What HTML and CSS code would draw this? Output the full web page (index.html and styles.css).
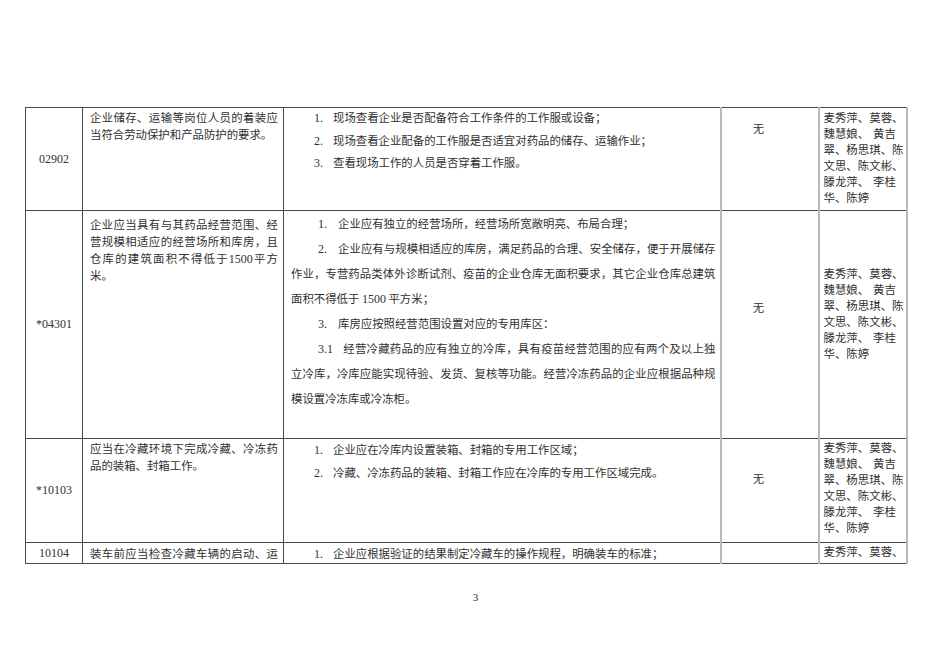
FILE: index.html
```html
<!DOCTYPE html>
<html lang="zh-CN">
<head>
<meta charset="utf-8">
<title>检查表</title>
<link rel="stylesheet" href="styles.css">
</head>
<body>
<div class="page">
  <table class="grid">
    <colgroup>
      <col class="c1"><col class="c2"><col class="c3"><col class="c4"><col class="c5">
    </colgroup>
    <tr class="r1">
      <td class="code">02902</td>
      <td class="req">
        <div class="j">企业储存、运输等岗位人员的着装应</div>
        <div>当符合劳动保护和产品防护的要求。</div>
      </td>
      <td class="method m1">
        <div class="item"><span class="num">1.</span><span>现场查看企业是否配备符合工作条件的工作服或设备；</span></div>
        <div class="item"><span class="num">2.</span><span>现场查看企业配备的工作服是否适宜对药品的储存、运输作业；</span></div>
        <div class="item"><span class="num">3.</span><span>查看现场工作的人员是否穿着工作服。</span></div>
      </td>
      <td class="none n1">无</td>
      <td class="names p1">
        <div class="j">麦秀萍、莫蓉、</div>
        <div>魏慧娘、<span class="sp"></span>黄吉</div>
        <div class="j">翠、杨思琪、陈</div>
        <div class="j">文思、陈文彬、</div>
        <div>滕龙萍、<span class="sp"></span>李桂</div>
        <div>华、陈婷</div>
      </td>
    </tr>
    <tr class="r2">
      <td class="code">*04301</td>
      <td class="req q2">
        <div class="j">企业应当具有与其药品经营范围、经</div>
        <div class="j">营规模相适应的经营场所和库房，且</div>
        <div class="j">仓库的建筑面积不得低于<span class="d">1500</span>平方</div>
        <div>米。</div>
      </td>
      <td class="method m2">
        <div class="ind"><span class="num2">1.</span>企业应有独立的经营场所，经营场所宽敞明亮、布局合理；</div>
        <div class="ind j"><span class="num2">2.</span>企业应有与规模相适应的库房，满足药品的合理、安全储存，便于开展储存</div>
        <div class="j">作业，专营药品类体外诊断试剂、疫苗的企业仓库无面积要求，其它企业仓库总建筑</div>
        <div>面积不得低于 <span class="d">1500</span> 平方米；</div>
        <div class="ind"><span class="num2">3.</span>库房应按照经营范围设置对应的专用库区：</div>
        <div class="ind j"><span class="num3">3.1</span>经营冷藏药品的应有独立的冷库，具有疫苗经营范围的应有两个及以上独</div>
        <div class="j">立冷库，冷库应能实现待验、发货、复核等功能。经营冷冻药品的企业应根据品种规</div>
        <div>模设置冷冻库或冷冻柜。</div>
      </td>
      <td class="none n2">无</td>
      <td class="names p2">
        <div class="j">麦秀萍、莫蓉、</div>
        <div>魏慧娘、<span class="sp"></span>黄吉</div>
        <div class="j">翠、杨思琪、陈</div>
        <div class="j">文思、陈文彬、</div>
        <div>滕龙萍、<span class="sp"></span>李桂</div>
        <div>华、陈婷</div>
      </td>
    </tr>
    <tr class="r3">
      <td class="code">*10103</td>
      <td class="req">
        <div class="j">应当在冷藏环境下完成冷藏、冷冻药</div>
        <div>品的装箱、封箱工作。</div>
      </td>
      <td class="method m3">
        <div class="item"><span class="num">1.</span><span>企业应在冷库内设置装箱、封箱的专用工作区域；</span></div>
        <div class="item"><span class="num">2.</span><span>冷藏、冷冻药品的装箱、封箱工作应在冷库的专用工作区域完成。</span></div>
      </td>
      <td class="none n3">无</td>
      <td class="names">
        <div class="j">麦秀萍、莫蓉、</div>
        <div>魏慧娘、<span class="sp"></span>黄吉</div>
        <div class="j">翠、杨思琪、陈</div>
        <div class="j">文思、陈文彬、</div>
        <div>滕龙萍、<span class="sp"></span>李桂</div>
        <div>华、陈婷</div>
      </td>
    </tr>
    <tr class="r4">
      <td class="code">10104</td>
      <td class="req q4">
        <div class="j">装车前应当检查冷藏车辆的启动、运</div>
      </td>
      <td class="method m4">
        <div class="item"><span class="num">1.</span><span>企业应根据验证的结果制定冷藏车的操作规程，明确装车的标准；</span></div>
      </td>
      <td class="none"></td>
      <td class="names q4">
        <div class="j">麦秀萍、莫蓉、</div>
      </td>
    </tr>
  </table>
  <div class="pageno">3</div>
</div>
</body>
</html>
```

FILE: styles.css
```css
html, body {
  margin: 0;
  padding: 0;
  background: #ffffff;
}

.page {
  width: 950px;
  height: 672px;
  overflow: hidden;
  font-family: "Noto Sans CJK SC", "Liberation Serif", sans-serif;
  font-size: 11.4px;
  color: #303030;
  padding-top: 107px;
  box-sizing: border-box;
}

.grid {
  margin-left: 25px;
  border-collapse: collapse;
  table-layout: fixed;
  width: 881px;
}

.c1 { width: 57px; }
.c2 { width: 201px; }
.c3 { width: 437px; }
.c4 { width: 98px; }
.c5 { width: 88px; }

.grid td {
  padding: 0;
  vertical-align: top;
  border-top: 1px solid #484848;
  border-bottom: 1px solid #484848;
  overflow: hidden;
}

.r1 { height: 103px; }
.r2 { height: 228px; }
.r3 { height: 104px; }
.r4 { height: 21px; }

.j {
  white-space: nowrap;
  text-align: justify;
  text-align-last: justify;
}

.sp {
  display: inline-block;
  width: 4px;
}

.d,
.num,
.num2,
.num3 {
  font-family: "Liberation Serif", serif;
  font-size: 12px;
  line-height: 0;
}

.code {
  vertical-align: middle !important;
  text-align: center;
  border-left: 1px solid #484848;
  font-family: "Liberation Serif", serif;
  font-size: 12px;
}

.req {
  border-left: 1px solid #484848;
  padding: 1px 5px 0 7px !important;
  line-height: 17px;
}

.q2 { padding-top: 5px !important; }
.q4 { padding-top: 2px !important; line-height: 16px; }

.method {
  border-left: 1px solid #484848;
  padding: 0 4px 0 7px !important;
}

.item {
  display: flex;
  align-items: baseline;
  padding-left: 23px;
  line-height: 16px;
}

.num {
  width: 19px;
  flex: none;
}

.m1 { padding-top: 1px !important; }
.m1 .item { margin-bottom: 6.5px; }

.m2 { padding-top: 0 !important; line-height: 25px; }
.m3 { padding-top: 2px !important; }
.m3 .item { margin-bottom: 7px; }
.m4 { padding-top: 2px !important; }

.ind { padding-left: 27px; }
.num2 { display: inline-block; width: 20px; text-align: left; }
.num3 { display: inline-block; width: 25px; text-align: left; }

.none {
  border-left: 2px solid #b8b8b8;
  text-align: center;
  padding-right: 22px !important;
  line-height: 16px;
}

.n1 { padding-top: 12px !important; }
.n2 { padding-top: 88px !important; }
.n3 { padding-top: 31px !important; }

.names {
  border-left: 2px solid #b8b8b8;
  border-right: 2px solid #b8b8b8;
  padding: 0 2px 0 4px !important;
  line-height: 16px;
  white-space: nowrap;
}

.p1 { padding-top: 1px !important; }
.p2 { padding-top: 54px !important; }

.pageno {
  margin-top: 27px;
  text-align: center;
  font-family: "Liberation Serif", serif;
  font-size: 11px;
  padding-left: 1px;
}
```
